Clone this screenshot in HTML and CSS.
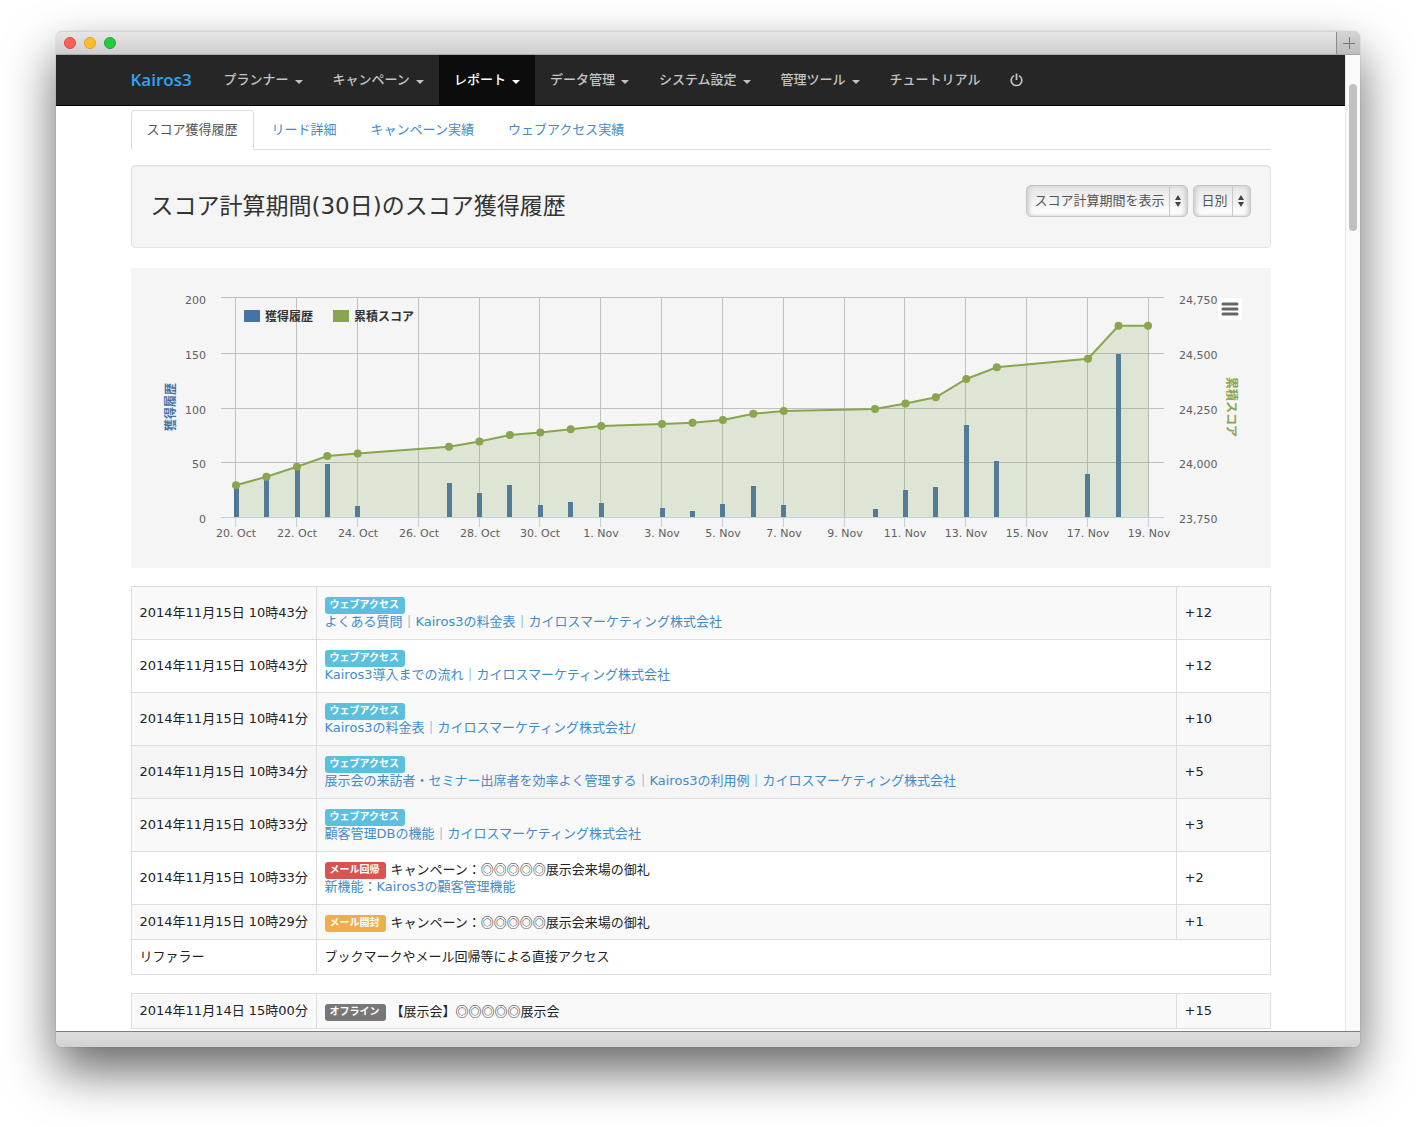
FILE: index.html
```html
<!DOCTYPE html>
<html lang="ja">
<head>
<meta charset="utf-8">
<title>Kairos3</title>
<link rel="stylesheet" href="styles.css">
</head>
<body>
<div class="window">
  <header class="titlebar">
    <div class="lights">
      <span class="light light-close"></span>
      <span class="light light-min"></span>
      <span class="light light-max"></span>
    </div>
    <button class="new-tab" type="button" aria-label="新規タブ">
      <svg width="12" height="12" viewBox="0 0 12 12"><path d="M0 6.5H12M6.5 0V12" stroke="#777" fill="none"/></svg>
    </button>
  </header>
  <div class="viewport">
    <div class="page">
      <nav class="navbar">
        <div class="container nav-row">
          <a class="brand" href="#">Kairos3</a>
          <a class="nav-link" href="#">プランナー<span class="caret"></span></a>
          <a class="nav-link" href="#">キャンペーン<span class="caret"></span></a>
          <a class="nav-link active" href="#">レポート<span class="caret"></span></a>
          <a class="nav-link" href="#">データ管理<span class="caret"></span></a>
          <a class="nav-link" href="#">システム設定<span class="caret"></span></a>
          <a class="nav-link" href="#">管理ツール<span class="caret"></span></a>
          <a class="nav-link" href="#">チュートリアル</a>
          <a class="nav-link" href="#" aria-label="ログアウト">
            <svg width="13" height="14" viewBox="0 0 13 14"><path d="M4 2.6A5.3 5.3 0 1 0 9 2.6" fill="none" stroke="currentColor" stroke-width="1.6"/><path d="M6.5 0.5V7" stroke="currentColor" stroke-width="1.8"/></svg>
          </a>
        </div>
      </nav>
      <main class="container">
        <ul class="tabs">
          <li><a class="tab tab-active" href="#">スコア獲得履歴</a></li>
          <li><a class="tab" href="#">リード詳細</a></li>
          <li><a class="tab" href="#">キャンペーン実績</a></li>
          <li><a class="tab" href="#">ウェブアクセス実績</a></li>
        </ul>

        <section class="well">
          <h3 class="well-title">スコア計算期間(30日)のスコア獲得履歴</h3>
          <form class="filters">
            <div class="picker">
              <select class="picker-select" aria-label="期間"><option>スコア計算期間を表示</option></select>
              <svg class="picker-arrows" width="6" height="12" viewBox="0 0 6 12"><path d="M0 5L3 0L6 5ZM0 7L3 12L6 7Z" fill="#444"/></svg>
            </div>
            <div class="picker">
              <select class="picker-select" aria-label="単位"><option>日別</option></select>
              <svg class="picker-arrows" width="6" height="12" viewBox="0 0 6 12"><path d="M0 5L3 0L6 5ZM0 7L3 12L6 7Z" fill="#444"/></svg>
            </div>
          </form>
        </section>

        <section class="chart">
          <svg class="chart-svg" viewBox="0 0 1140 300" role="img" aria-label="獲得履歴と累積スコア">
            <defs>
              <marker id="dot" markerUnits="userSpaceOnUse" markerWidth="10" markerHeight="10" refX="5" refY="5"><circle cx="5" cy="5" r="4" fill="#89a54e"/></marker>
            </defs>
            <path class="grid" d="M90 29.5H1033M90 85.5H1033M90 140.5H1033M90 194.5H1033M104.5 29V249M165.5 29V249M226.5 29V249M287.5 29V249M348.5 29V249M408.5 29V249M469.5 29V249M530.5 29V249M591.5 29V249M652.5 29V249M713.5 29V249M773.5 29V249M834.5 29V249M895.5 29V249M956.5 29V249M1017.5 29V249"/>
            <path class="axis" d="M90 249.5H1033M104.5 249V259M165.5 249V259M226.5 249V259M287.5 249V259M348.5 249V259M408.5 249V259M469.5 249V259M530.5 249V259M591.5 249V259M652.5 249V259M713.5 249V259M773.5 249V259M834.5 249V259M895.5 249V259M956.5 249V259M1017.5 249V259"/>
            <path class="bars" d="M105.5 249V219M135.5 249V210M166.5 249V198M196.5 249V196M226.5 249V238M318.5 249V215M348.5 249V225M378.5 249V217M409.5 249V237M439.5 249V234M470.5 249V235M531.5 249V240M561.5 249V243M591.5 249V236M622.5 249V218M652.5 249V237M744.5 249V241M774.5 249V222M804.5 249V219M835.5 249V157M865.5 249V193M956.5 249V206M987.5 249V86"/>
            <path class="area" d="M105 249V217.2L135.4 208.7L165.9 198.7L196.3 188L226.7 185.5L318 178.7L348.4 173.5L378.9 167L409.3 164.5L439.7 161.3L470.2 158L531 156L561.5 154.7L591.9 152L622.3 145.7L652.7 143L744 141L774.5 135.5L804.9 129.3L835.3 111L865.8 99.3L957 90.7L987.5 57.7H1018V249Z"/>
            <polyline class="line" points="105,217.2 135.4,208.7 165.9,198.7 196.3,188 226.7,185.5 318,178.7 348.4,173.5 378.9,167 409.3,164.5 439.7,161.3 470.2,158 531,156 561.5,154.7 591.9,152 622.3,145.7 652.7,143 744,141 774.5,135.5 804.9,129.3 835.3,111 865.8,99.3 957,90.7 987.5,57.7 1017,57.7"/>
            <g class="tick-label tick-left">
              <text x="75" y="36">200</text><text x="75" y="91">150</text><text x="75" y="146">100</text><text x="75" y="200">50</text><text x="75" y="255">0</text>
            </g>
            <g class="tick-label">
              <text x="1048" y="36">24,750</text><text x="1048" y="91">24,500</text><text x="1048" y="146">24,250</text><text x="1048" y="200">24,000</text><text x="1048" y="255">23,750</text>
            </g>
            <g class="tick-label tick-bottom">
              <text x="105" y="269">20. Oct</text><text x="166" y="269">22. Oct</text><text x="227" y="269">24. Oct</text><text x="288" y="269">26. Oct</text><text x="349" y="269">28. Oct</text><text x="409" y="269">30. Oct</text><text x="470" y="269">1. Nov</text><text x="531" y="269">3. Nov</text><text x="592" y="269">5. Nov</text><text x="653" y="269">7. Nov</text><text x="714" y="269">9. Nov</text><text x="774" y="269">11. Nov</text><text x="835" y="269">13. Nov</text><text x="896" y="269">15. Nov</text><text x="957" y="269">17. Nov</text><text x="1018" y="269">19. Nov</text>
            </g>
            <g class="legend">
              <rect x="113" y="42" width="16" height="12" fill="#4572a7"/><text x="134" y="53">獲得履歴</text>
              <rect x="202" y="42" width="16" height="12" fill="#89a54e"/><text x="223" y="53">累積スコア</text>
            </g>
            <text class="axis-title axis-title-left" transform="translate(44 139) rotate(-90)">獲得履歴</text>
            <text class="axis-title axis-title-right" transform="translate(1096 139) rotate(90)">累積スコア</text>
          </svg>
          <button class="chart-menu" type="button" aria-label="メニュー">
            <svg width="18" height="14" viewBox="0 0 18 14"><path d="M2 2H16M2 7H16M2 12H16" stroke="#666" stroke-width="3" stroke-linecap="round"/></svg>
          </button>
        </section>

        <table class="log">
          <colgroup><col class="col-date"><col><col class="col-score"></colgroup>
          <tbody>
            <tr><td class="date">2014年11月15日 10時43分</td><td><div class="entry"><span class="badge badge-web">ウェブアクセス</span></div><a class="entry-link" href="#">よくある質問｜Kairos3の料金表｜カイロスマーケティング株式会社</a></td><td>+12</td></tr>
            <tr><td class="date">2014年11月15日 10時43分</td><td><div class="entry"><span class="badge badge-web">ウェブアクセス</span></div><a class="entry-link" href="#">Kairos3導入までの流れ｜カイロスマーケティング株式会社</a></td><td>+12</td></tr>
            <tr><td class="date">2014年11月15日 10時41分</td><td><div class="entry"><span class="badge badge-web">ウェブアクセス</span></div><a class="entry-link" href="#">Kairos3の料金表｜カイロスマーケティング株式会社/</a></td><td>+10</td></tr>
            <tr class="row-hover"><td class="date">2014年11月15日 10時34分</td><td><div class="entry"><span class="badge badge-web">ウェブアクセス</span></div><a class="entry-link" href="#">展示会の来訪者・セミナー出席者を効率よく管理する｜Kairos3の利用例｜カイロスマーケティング株式会社</a></td><td>+5</td></tr>
            <tr><td class="date">2014年11月15日 10時33分</td><td><div class="entry"><span class="badge badge-web">ウェブアクセス</span></div><a class="entry-link" href="#">顧客管理DBの機能｜カイロスマーケティング株式会社</a></td><td>+3</td></tr>
            <tr><td class="date">2014年11月15日 10時33分</td><td><div class="entry"><span class="badge badge-return">メール回帰</span><span class="wide">キャンペーン：◎◎◎◎◎展示会来場の御礼</span></div><a class="entry-link" href="#">新機能：Kairos3の顧客管理機能</a></td><td>+2</td></tr>
            <tr><td class="date">2014年11月15日 10時29分</td><td><div class="entry"><span class="badge badge-open">メール開封</span><span class="wide">キャンペーン：◎◎◎◎◎展示会来場の御礼</span></div></td><td>+1</td></tr>
            <tr><td>リファラー</td><td colspan="2">ブックマークやメール回帰等による直接アクセス</td></tr>
          </tbody>
        </table>

        <table class="log">
          <colgroup><col class="col-date"><col><col class="col-score"></colgroup>
          <tbody>
            <tr><td class="date">2014年11月14日 15時00分</td><td><div class="entry"><span class="badge badge-offline">オフライン</span><span class="wide">【展示会】◎◎◎◎◎展示会</span></div></td><td>+15</td></tr>
          </tbody>
        </table>
      </main>
    </div>
    <div class="scroll-track"><div class="scroll-thumb"></div></div>
  </div>
  <footer class="statusbar"></footer>
</div>
</body>
</html>
```
FILE: styles.css
```css
* { box-sizing: border-box; }

body {
  margin: 0;
  padding: 31px 56px 80px;
  background: #fff;
  color: #222;
  font: 13px/18px "DejaVu Sans", "Noto Sans CJK JP", sans-serif;
}

a { text-decoration: none; color: #428bca; }

/* window frame */
.window {
  border-radius: 6px;
  background: #fff;
  box-shadow: 0 24px 50px rgba(0, 0, 0, .6), 0 0 1px rgba(0, 0, 0, .4);
}
.titlebar {
  display: flex;
  justify-content: space-between;
  height: 24px;
  border-top: 1px solid #d4d4d4;
  border-bottom: 1px solid #a8a8a8;
  border-radius: 6px 6px 0 0;
  background: linear-gradient(#e6e6e6, #cecece);
  overflow: hidden;
}
.lights { display: flex; align-items: center; gap: 8px; padding-left: 8px; }
.light { width: 12px; height: 12px; border: 1px solid; border-radius: 50%; }
.light-close { background: #ff5f57; border-color: #e2463f; }
.light-min { background: #ffbd2e; border-color: #dfa023; }
.light-max { background: #28ca42; border-color: #1bab2c; }
.new-tab {
  display: flex;
  align-items: center;
  justify-content: center;
  width: 24px;
  padding: 0;
  border: 0;
  border-left: 1px solid #8c8c8c;
  background: linear-gradient(#d4d4d4, #bdbdbd);
}
.viewport { display: flex; }
.page { flex: 1; min-width: 0; }
.scroll-track {
  width: 15px;
  padding: 29px 3px 0;
  border-left: 1px solid #e8e8e8;
  background: #fafafa;
}
.scroll-thumb { width: 8px; height: 147px; border-radius: 4px; background: #c1c1c1; }
.statusbar {
  height: 16px;
  border-top: 1px solid #7c7c7c;
  border-radius: 0 0 6px 6px;
  background: linear-gradient(#dedede, #d2d2d2);
}
.container { max-width: 1140px; margin: 0 auto; }

/* navigation */
.navbar { border-bottom: 1px solid #000; background: #262626; }
.nav-row { display: flex; height: 50px; }
.brand {
  display: flex;
  align-items: center;
  width: 78px;
  color: #33a5ee;
  font: 600 17px/18px "Open Sans", sans-serif;
}
.nav-link {
  display: flex;
  align-items: center;
  gap: 6px;
  padding: 0 15px;
  color: #c4c4c4;
  font-weight: 500;
  white-space: nowrap;
}
.nav-link.active { background: #0c0c0c; color: #fff; }
.caret {
  margin-top: 4px;
  border: 4px solid transparent;
  border-top-color: currentColor;
  border-bottom: 0;
}

/* tabs */
.tabs {
  display: flex;
  gap: 2px;
  margin: 4px 0 15px;
  padding: 0;
  border-bottom: 1px solid #ddd;
  list-style: none;
}
.tabs li { margin-bottom: -1px; }
.tab { display: block; padding: 10px 15px; border: 1px solid transparent; border-radius: 4px 4px 0 0; }
.tab-active { border-color: #ddd #ddd #fff; background: #fff; color: #555; }

/* heading panel */
.well {
  display: flex;
  justify-content: space-between;
  align-items: flex-start;
  margin-bottom: 20px;
  padding: 19px;
  border: 1px solid #e3e3e3;
  border-radius: 4px;
  background: #f5f5f5;
  box-shadow: inset 0 1px 1px rgba(0, 0, 0, .05);
}
.well-title { margin: 9px 0; color: #333; font-size: 23px; font-weight: 400; line-height: 25px; }
.filters { display: flex; gap: 5px; }
.picker { position: relative; }
.picker-select {
  height: 32px;
  padding: 0 21px 0 8px;
  border: 1px solid #c6c6c6;
  border-radius: 5px;
  appearance: none;
  background:
    linear-gradient(#c8c8c8, #c8c8c8) right 17px top 0 / 1px 100% no-repeat,
    linear-gradient(#e6e6e6, #fff);
  box-shadow: inset 3px 0 4px -1px #ccc, inset -3px 0 4px -1px #ccc;
  color: #555;
  font: inherit;
}
.picker-arrows { position: absolute; top: 10px; right: 7px; pointer-events: none; }

/* chart */
.chart { position: relative; margin-bottom: 18px; background: #f5f5f5; }
.chart-svg { display: block; width: 100%; }
.grid { stroke: #c0c0c0; fill: none; }
.axis { stroke: #c0d0e0; fill: none; }
.bars { stroke: #4572a7; stroke-width: 5; fill: none; }
.area { fill: #89a54e; fill-opacity: .2; }
.line { fill: none; stroke: #89a54e; stroke-width: 2; marker: url(#dot); }
.tick-label { fill: #606060; font-size: 11px; }
.tick-left { text-anchor: end; }
.tick-bottom { text-anchor: middle; }
.legend { fill: #333; font-size: 12px; font-weight: 700; }
.axis-title { font-size: 12px; font-weight: 700; text-anchor: middle; }
.axis-title-left { fill: #4572a7; }
.axis-title-right { fill: #89a54e; }
.chart-menu {
  position: absolute;
  top: 30px;
  right: 29px;
  display: flex;
  align-items: center;
  justify-content: center;
  width: 24px;
  height: 22px;
  padding: 0;
  border: 0;
  border-radius: 2px;
  background: #fff;
}

/* history tables */
.log {
  width: 100%;
  margin-bottom: 18px;
  border-collapse: collapse;
  table-layout: fixed;
}
.log:last-child { margin-bottom: 2px; }
.col-date { width: 185px; }
.col-score { width: 94px; }
.log td { padding: 8px; border: 1px solid #ddd; vertical-align: middle; }
.log .date { white-space: nowrap; }
.log tr:nth-child(odd) { background: #f9f9f9; }
.log .row-hover { background: #f5f5f5; }
.entry { display: flex; align-items: flex-start; gap: 5px; height: 18px; }
.wide { font-family: "Noto Sans CJK JP", sans-serif; }
.entry-link { display: block; }
.badge {
  height: 17px;
  margin-top: 2px;
  padding: 0 6px 0 5px;
  border-radius: 3px;
  color: #fff;
  font-size: 10px;
  font-weight: 700;
  line-height: 16px;
}
.badge-web { background: #5bc0de; }
.badge-return { background: #d9534f; }
.badge-open { background: #f0ad4e; }
.badge-offline { background: #777; }
```
